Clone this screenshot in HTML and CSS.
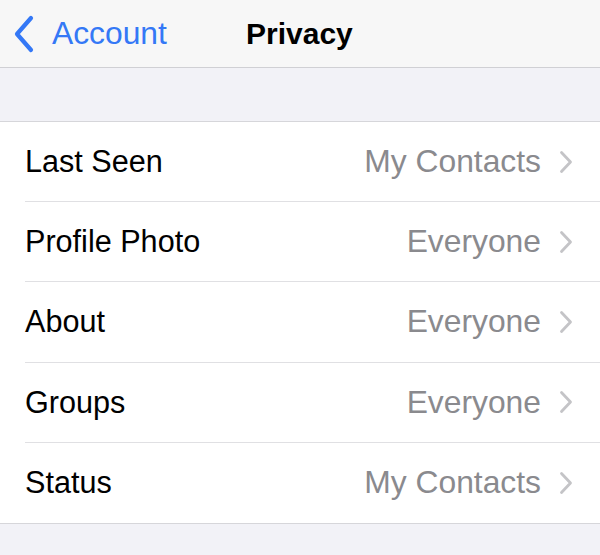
FILE: index.html
```html
<!DOCTYPE html>
<html>
<head>
<meta charset="utf-8">
<link rel="stylesheet" href="styles.css">
</head>
<body>
<div class="nav">
  <div class="back">
    <svg class="back-icon" width="22" height="38" viewBox="0 0 22 38"><path d="M18 3 L4 19 L18 35" fill="none" stroke="#3478f6" stroke-width="4.2" stroke-linecap="round" stroke-linejoin="round"/></svg>
    <span class="back-label">Account</span>
  </div>
  <div class="title">Privacy</div>
</div>
<div class="spacer"></div>
<div class="list">
  <div class="row"><span class="label">Last Seen</span><span class="value">My Contacts</span><svg class="chev" width="14" height="24" viewBox="0 0 14 24"><path d="M2.5 2.5 L11.5 12 L2.5 21.5" fill="none" stroke="#c4c4c7" stroke-width="2.8" stroke-linecap="round" stroke-linejoin="round"/></svg></div>
  <div class="row"><span class="label">Profile Photo</span><span class="value">Everyone</span><svg class="chev" width="14" height="24" viewBox="0 0 14 24"><path d="M2.5 2.5 L11.5 12 L2.5 21.5" fill="none" stroke="#c4c4c7" stroke-width="2.8" stroke-linecap="round" stroke-linejoin="round"/></svg></div>
  <div class="row"><span class="label">About</span><span class="value">Everyone</span><svg class="chev" width="14" height="24" viewBox="0 0 14 24"><path d="M2.5 2.5 L11.5 12 L2.5 21.5" fill="none" stroke="#c4c4c7" stroke-width="2.8" stroke-linecap="round" stroke-linejoin="round"/></svg></div>
  <div class="row"><span class="label">Groups</span><span class="value">Everyone</span><svg class="chev" width="14" height="24" viewBox="0 0 14 24"><path d="M2.5 2.5 L11.5 12 L2.5 21.5" fill="none" stroke="#c4c4c7" stroke-width="2.8" stroke-linecap="round" stroke-linejoin="round"/></svg></div>
  <div class="row"><span class="label">Status</span><span class="value">My Contacts</span><svg class="chev" width="14" height="24" viewBox="0 0 14 24"><path d="M2.5 2.5 L11.5 12 L2.5 21.5" fill="none" stroke="#c4c4c7" stroke-width="2.8" stroke-linecap="round" stroke-linejoin="round"/></svg></div>
</div>
</body>
</html>
```
FILE: styles.css
```css
html, body {
  margin: 0;
  padding: 0;
}
body {
  width: 600px;
  height: 555px;
  overflow: hidden;
  background: #f2f2f7;
  font-family: "Liberation Sans", Arial, sans-serif;
}
.nav {
  height: 67px;
  background: #f7f7f7;
  border-bottom: 1px solid #d0d0d4;
  display: flex;
  align-items: center;
  position: relative;
}
.back {
  display: flex;
  align-items: center;
  padding-left: 13px;
  gap: 17px;
}
.back-icon {
  display: block;
}
.back-label {
  color: #3478f6;
  font-size: 31.8px;
}
.title {
  position: absolute;
  left: 246px;
  top: 0;
  height: 67px;
  line-height: 67px;
  font-size: 30px;
  font-weight: bold;
  color: #000;
}
.spacer {
  height: 53px;
  border-bottom: 1px solid #d6d6da;
}
.list {
  background: #fff;
  padding-left: 25px;
  border-bottom: 1px solid #d6d6da;
}
.row {
  height: 79.2px;
  display: flex;
  align-items: center;
  padding-right: 27px;
  border-bottom: 1px solid #e0e0e3;
}
.row:last-child {
  height: 80.2px;
  border-bottom: none;
}
.label {
  font-size: 30.6px;
  color: #000;
  flex: 1;
}
.value {
  font-size: 31.8px;
  color: #8a8a8e;
  margin-right: 18px;
}
.chev {
  display: block;
}
```
